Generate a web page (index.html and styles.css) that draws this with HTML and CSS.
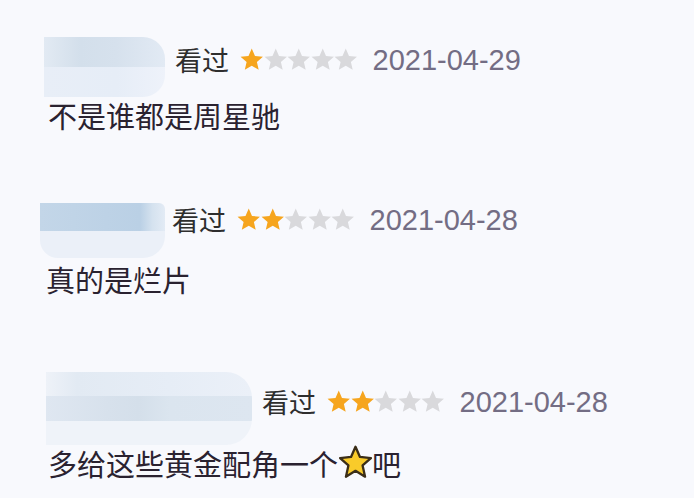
FILE: index.html
```html
<!DOCTYPE html>
<html lang="zh-CN">
<head>
    <meta charset="UTF-8">
    <meta name="viewport" content="width=device-width, initial-scale=1.0">
    <title>短评</title>
    <link rel="stylesheet" href="styles.css">
</head>
<body>
    <div class="lista">
        <div class="review review-uno">
            <div class="cabecera">
                <div class="mosaico mosaico-uno"><span></span><span></span></div>
                <div class="meta">
                    <span class="visto">看过</span>
                    <span class="estrellas">
                        <svg class="star on" viewBox="1.5 1.5 21 21"><polygon points="12,2 14.9,8.6 22,9.3 16.6,14 18.2,21 12,17.3 5.8,21 7.4,14 2,9.3 9.1,8.6"/></svg>
                        <svg class="star" viewBox="1.5 1.5 21 21"><polygon points="12,2 14.9,8.6 22,9.3 16.6,14 18.2,21 12,17.3 5.8,21 7.4,14 2,9.3 9.1,8.6"/></svg>
                        <svg class="star" viewBox="1.5 1.5 21 21"><polygon points="12,2 14.9,8.6 22,9.3 16.6,14 18.2,21 12,17.3 5.8,21 7.4,14 2,9.3 9.1,8.6"/></svg>
                        <svg class="star" viewBox="1.5 1.5 21 21"><polygon points="12,2 14.9,8.6 22,9.3 16.6,14 18.2,21 12,17.3 5.8,21 7.4,14 2,9.3 9.1,8.6"/></svg>
                        <svg class="star" viewBox="1.5 1.5 21 21"><polygon points="12,2 14.9,8.6 22,9.3 16.6,14 18.2,21 12,17.3 5.8,21 7.4,14 2,9.3 9.1,8.6"/></svg>
                    </span>
                    <span class="fecha">2021-04-29</span>
                </div>
            </div>
            <p class="comentario">不是谁都是周星驰</p>
        </div>

        <div class="review review-dos">
            <div class="cabecera">
                <div class="mosaico mosaico-dos"><span></span><span></span></div>
                <div class="meta">
                    <span class="visto">看过</span>
                    <span class="estrellas">
                        <svg class="star on" viewBox="1.5 1.5 21 21"><polygon points="12,2 14.9,8.6 22,9.3 16.6,14 18.2,21 12,17.3 5.8,21 7.4,14 2,9.3 9.1,8.6"/></svg>
                        <svg class="star on" viewBox="1.5 1.5 21 21"><polygon points="12,2 14.9,8.6 22,9.3 16.6,14 18.2,21 12,17.3 5.8,21 7.4,14 2,9.3 9.1,8.6"/></svg>
                        <svg class="star" viewBox="1.5 1.5 21 21"><polygon points="12,2 14.9,8.6 22,9.3 16.6,14 18.2,21 12,17.3 5.8,21 7.4,14 2,9.3 9.1,8.6"/></svg>
                        <svg class="star" viewBox="1.5 1.5 21 21"><polygon points="12,2 14.9,8.6 22,9.3 16.6,14 18.2,21 12,17.3 5.8,21 7.4,14 2,9.3 9.1,8.6"/></svg>
                        <svg class="star" viewBox="1.5 1.5 21 21"><polygon points="12,2 14.9,8.6 22,9.3 16.6,14 18.2,21 12,17.3 5.8,21 7.4,14 2,9.3 9.1,8.6"/></svg>
                    </span>
                    <span class="fecha">2021-04-28</span>
                </div>
            </div>
            <p class="comentario">真的是烂片</p>
        </div>

        <div class="review review-tres">
            <div class="cabecera">
                <div class="mosaico mosaico-tres"><span></span><span></span><span></span></div>
                <div class="meta">
                    <span class="visto">看过</span>
                    <span class="estrellas">
                        <svg class="star on" viewBox="1.5 1.5 21 21"><polygon points="12,2 14.9,8.6 22,9.3 16.6,14 18.2,21 12,17.3 5.8,21 7.4,14 2,9.3 9.1,8.6"/></svg>
                        <svg class="star on" viewBox="1.5 1.5 21 21"><polygon points="12,2 14.9,8.6 22,9.3 16.6,14 18.2,21 12,17.3 5.8,21 7.4,14 2,9.3 9.1,8.6"/></svg>
                        <svg class="star" viewBox="1.5 1.5 21 21"><polygon points="12,2 14.9,8.6 22,9.3 16.6,14 18.2,21 12,17.3 5.8,21 7.4,14 2,9.3 9.1,8.6"/></svg>
                        <svg class="star" viewBox="1.5 1.5 21 21"><polygon points="12,2 14.9,8.6 22,9.3 16.6,14 18.2,21 12,17.3 5.8,21 7.4,14 2,9.3 9.1,8.6"/></svg>
                        <svg class="star" viewBox="1.5 1.5 21 21"><polygon points="12,2 14.9,8.6 22,9.3 16.6,14 18.2,21 12,17.3 5.8,21 7.4,14 2,9.3 9.1,8.6"/></svg>
                    </span>
                    <span class="fecha">2021-04-28</span>
                </div>
            </div>
            <p class="comentario">多给这些黄金配角一个<svg class="emoji" viewBox="0 0 24 24"><polygon points="12,1.8 14.9,8.4 22,9.1 16.6,13.9 18.2,21.2 12,17.4 5.8,21.2 7.4,13.9 2,9.1 9.1,8.4"/></svg>吧</p>
        </div>
    </div>
</body>
</html>
```

FILE: styles.css
```css
body {
    margin: 0;
    background: #f8f9fd;
    font-family: "Noto Sans CJK SC", "Liberation Sans", sans-serif;
    color: #2a2430;
}

.lista {
    padding: 37px 0 0 0;
}

/* cada comentario */
.review-dos {
    margin-top: 72px;
}

.review-tres {
    margin-top: 77px;
}

.cabecera {
    display: flex;
    align-items: flex-start;
}

/* nombre de usuario pixelado */
.mosaico {
    display: flex;
    flex-direction: column;
    border-radius: 0 22px 22px 0;
    overflow: hidden;
}

.mosaico span {
    flex: 1;
}

.mosaico-uno {
    width: 121px;
    height: 60px;
    margin-left: 44px;
}

.mosaico-uno span:nth-child(1) {
    background: linear-gradient(to right, #e2eaf3 0, #d3dfeb 30%, #d6e1ed 60%, #e2eaf4 100%);
}

.mosaico-uno span:nth-child(2) {
    background: linear-gradient(to right, #e8eef7 0, #e6edf7 60%, #eef2fa 100%);
}

.mosaico-dos {
    width: 125px;
    height: 55px;
    margin-left: 40px;
    border-radius: 0 6px 22px 18px;
}

.mosaico-dos span:nth-child(1) {
    background: linear-gradient(to right, #c3d6e8 0, #bad0e5 80%, #d5e2ef 90%, #e3ebf5 100%);
}

.mosaico-dos span:nth-child(2) {
    background: #ebf0f8;
}

.mosaico-tres {
    width: 206px;
    height: 73px;
    margin-left: 46px;
    border-radius: 0 26px 26px 0;
}

.mosaico-tres span:nth-child(1) {
    background: linear-gradient(to right, #eef2f8 0, #e2eaf3 15%, #e6edf6 60%, #ebf0f8 100%);
}

.mosaico-tres span:nth-child(2) {
    background: linear-gradient(to right, #dfe7f1 0, #d7e1ec 30%, #d4dfea 45%, #dbe5ef 60%, #dde6f0 100%);
}

.mosaico-tres span:nth-child(3) {
    background: #eff3f9;
}

.meta {
    display: flex;
    align-items: center;
    height: 32px;
    margin-left: 10px;
}

.review-uno .meta {
    margin-top: 7px;
}

.review-dos .meta {
    margin-top: 1px;
    margin-left: 7px;
}

.review-tres .meta {
    margin-top: 14px;
}

.visto {
    font-size: 27px;
    line-height: 32px;
    color: #2e2e2e;
}

.estrellas {
    display: flex;
    margin-left: 11px;
}

.star {
    width: 23.5px;
    height: 23.5px;
}

.star polygon {
    fill: #d9d9dc;
}

.star.on polygon {
    fill: #f6a51e;
}

.fecha {
    margin-left: 15px;
    font-family: "Liberation Sans", Arial, sans-serif;
    font-size: 29px;
    line-height: 32px;
    color: #736d84;
}

.comentario {
    margin: 2px 0 0 48px;
    font-size: 29px;
    line-height: 32px;
    color: #2a2230;
    display: flex;
    align-items: center;
}

.review-dos .comentario {
    margin-top: 5px;
    margin-left: 46px;
}

.review-tres .comentario {
    margin-top: -1px;
}

.emoji {
    width: 37px;
    height: 37px;
    margin: 0 -2px 0 -1px;
}

.emoji polygon {
    fill: #f9cb2a;
    stroke: #3b2e18;
    stroke-width: 1.5;
    stroke-linejoin: round;
}
```
